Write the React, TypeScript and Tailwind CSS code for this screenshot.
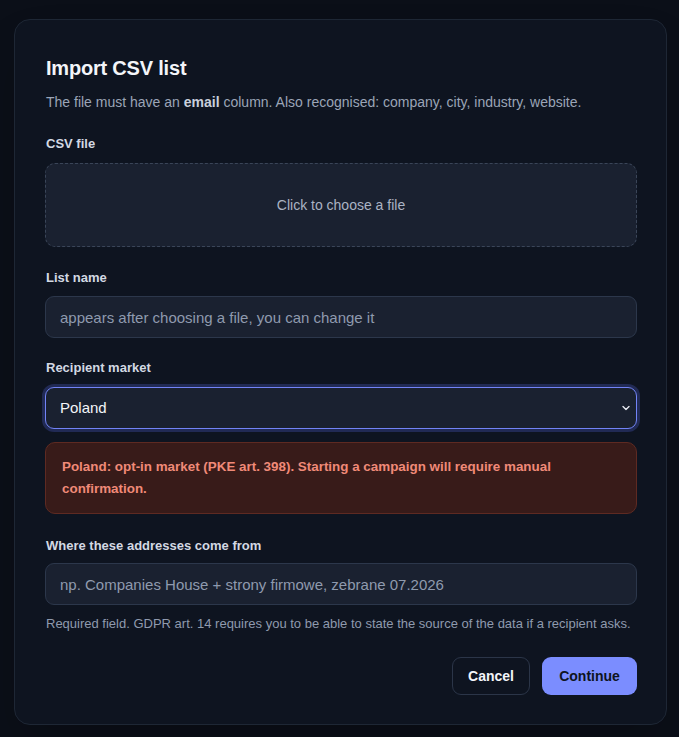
import React, { useState } from "react";

const font = { fontFamily: '"Liberation Sans", Arial, sans-serif' };

function Label({ children, className = "" }: { children: React.ReactNode; className?: string }) {
  return (
    <div className={`text-[13px] leading-[18px] font-semibold text-[#d3d9e3] ${className}`}>
      {children}
    </div>
  );
}

export default function App() {
  const [market, setMarket] = useState("pl");
  const [listName, setListName] = useState("");
  const [source, setSource] = useState("");

  return (
    <div style={font} className="min-h-screen w-full bg-[#0b0f18] pt-[19px] px-[14px] pb-[13px]">
      <div className="w-[653px] rounded-[16px] border border-[#1e2735] bg-[#0e1420] pt-[34px] pb-[29px] pl-[30px] pr-[29px] shadow-2xl">
        <h1 className="text-[20px] leading-[28px] font-bold text-[#f3f5f9] tracking-[-0.2px] pl-px">
          Import CSV list
        </h1>
        <p className="mt-[10px] pl-px text-[14px] leading-[20px] text-[#9ba5b7]">
          The file must have an <span className="font-bold text-[#c9d0dc]">email</span> column. Also
          recognised: company, city, industry, website.
        </p>

        <Label className="mt-[23px] pl-px">CSV file</Label>
        <button className="mt-[10px] flex h-[84px] w-full items-center justify-center rounded-[10px] border border-dashed border-[#3a4558] bg-[#1a2130] text-[14px] text-[#aab3c3]">
          Click to choose a file
        </button>

        <Label className="mt-[22px] pl-px">List name</Label>
        <input
          value={listName}
          onChange={(e) => setListName(e.target.value)}
          placeholder="appears after choosing a file, you can change it"
          className="mt-[9px] h-[42px] w-full rounded-[9px] border border-[#2c374b] bg-[#1a2130] px-[14px] text-[15px] text-[#f3f5f9] placeholder:text-[#8f9aae] outline-none"
        />

        <Label className="mt-[21px] pl-px">Recipient market</Label>
        <div className="relative mt-[10px]">
          <select
            value={market}
            onChange={(e) => setMarket(e.target.value)}
            className="h-[42px] w-full appearance-none rounded-[9px] border border-[#7283f6] bg-[#1a2130] px-[14px] text-[15px] text-[#f3f5f9] outline-none ring-[3px] ring-[#5b6cf0]/25"
          >
            <option value="pl">Poland</option>
            <option value="uk">United Kingdom</option>
            <option value="de">Germany</option>
          </select>
          <svg
            className="pointer-events-none absolute right-[7px] top-1/2 -translate-y-1/2"
            width="8"
            height="5"
            viewBox="0 0 8 5"
            fill="none"
          >
            <path d="M1 1l3 3 3-3" stroke="#e6e9f0" strokeWidth="1.4" strokeLinecap="round" />
          </svg>
        </div>

        <div className="mt-[13px] rounded-[10px] border border-[#5e2a22] bg-[#381b19] px-[16px] py-[13px] text-[13.4px] leading-[22px] font-semibold text-[#f08a78]">
          Poland: opt-in market (PKE art. 398). Starting a campaign will require manual confirmation.
        </div>

        <Label className="mt-[23px] pl-px">Where these addresses come from</Label>
        <input
          value={source}
          onChange={(e) => setSource(e.target.value)}
          placeholder="np. Companies House + strony firmowe, zebrane 07.2026"
          className="mt-[8px] h-[42px] w-full rounded-[9px] border border-[#2c374b] bg-[#1a2130] px-[14px] text-[15px] text-[#f3f5f9] placeholder:text-[#8f9aae] outline-none"
        />
        <p className="mt-[10px] pl-px text-[13px] leading-[18px] text-[#8f9aae]">
          Required field. GDPR art. 14 requires you to be able to state the source of the data if a
          recipient asks.
        </p>

        <div className="mt-[24px] flex justify-end gap-[12px]">
          <button className="h-[38px] w-[78px] rounded-[9px] border border-[#2b3548] bg-[#0e1420] text-[14px] font-bold text-[#f3f5f9]">
            Cancel
          </button>
          <button className="h-[38px] w-[95px] rounded-[9px] bg-[#7b8dff] text-[14px] font-bold text-[#0e1420]">
            Continue
          </button>
        </div>
      </div>
    </div>
  );
}
